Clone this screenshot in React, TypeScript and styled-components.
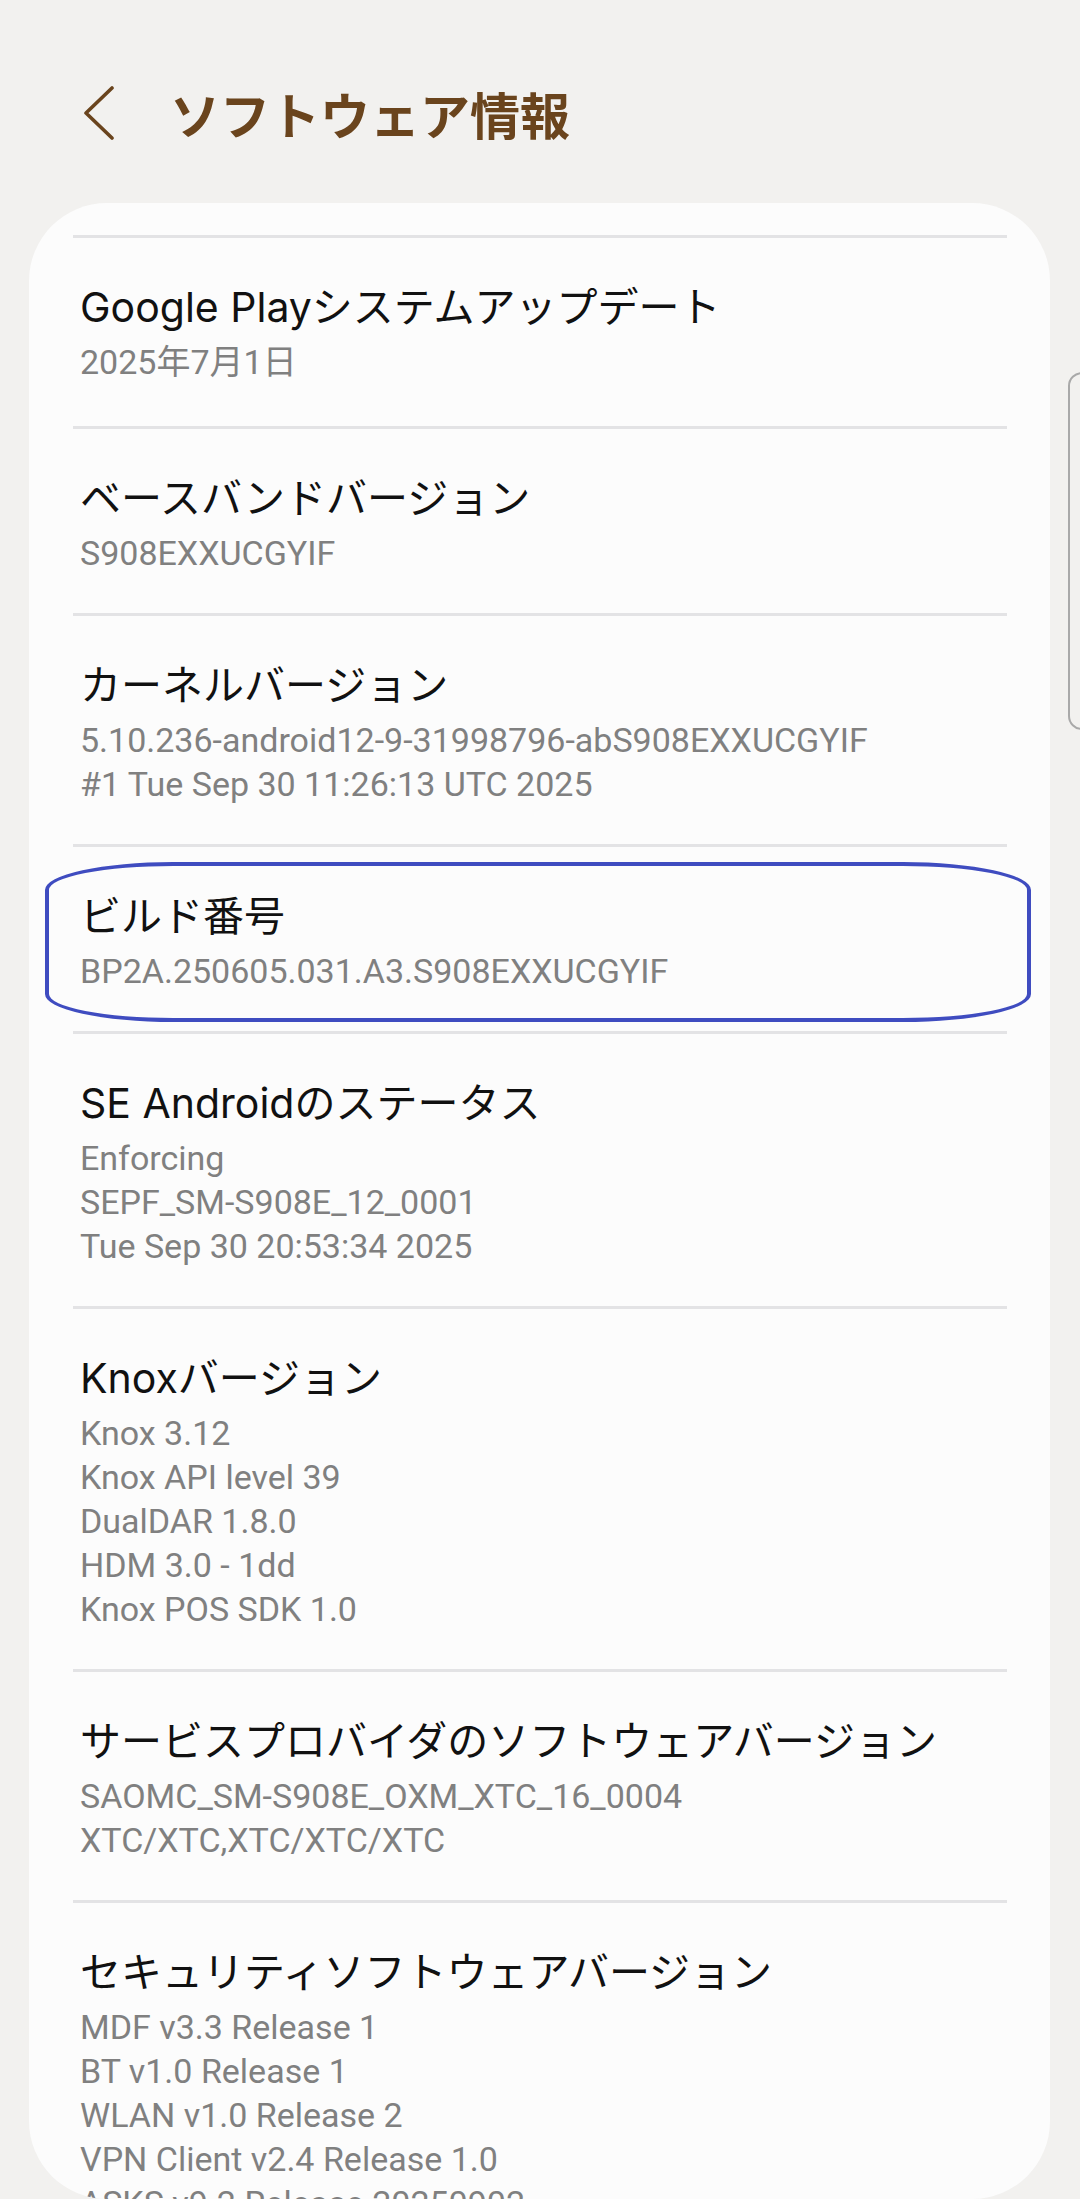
import React from "react";
import styled, { createGlobalStyle } from "styled-components";

const GlobalStyle = createGlobalStyle`
  html, body {
    margin: 0;
    padding: 0;
    background: #f2f1ef;
  }
  body {
    width: 1080px;
    height: 2199px;
    overflow: hidden;
    -webkit-font-smoothing: antialiased;
  }
`;

const Page = styled.div`
  position: relative;
  width: 1080px;
  height: 2199px;
  background: #f2f1ef;
  display: flex;
  flex-direction: column;
  overflow: hidden;
`;

const Header = styled.header`
  height: 203px;
  box-sizing: border-box;
  display: flex;
  align-items: flex-start;
  gap: 54px;
  padding: 86px 0 0 82px;
`;

const BackButton = styled.button`
  border: none;
  background: transparent;
  padding: 0;
  margin: 0;
  width: 34px;
  height: 54px;
  display: flex;
  cursor: pointer;
`;

const Title = styled.h1`
  margin: 2px 0 0 0;
  font-family: "Noto Sans CJK JP", "Noto Sans", sans-serif;
  font-weight: 700;
  font-size: 50px;
  line-height: 50px;
  color: #6a441d;
  letter-spacing: 0;
`;

const Card = styled.section`
  margin-left: 29px;
  width: 1021px;
  height: 1996px;
  box-sizing: border-box;
  background: #fcfcfc;
  border-radius: 78px;
  overflow: hidden;
  padding: 32px 43px 0 44px;
`;

const List = styled.ul`
  list-style: none;
  margin: 0;
  padding: 0;
  display: flex;
  flex-direction: column;
`;

const Item = styled.li`
  position: relative;
  border-top: 3px solid #e3e3e5;
  padding: 41px 0 38px 7px;
  display: flex;
  flex-direction: column;
`;

const ItemTitle = styled.div`
  font-family: Inter, "Noto Sans CJK JP", sans-serif;
  font-size: 41px;
  line-height: 56px;
  height: 56px;
  color: #111111;
  white-space: nowrap;
`;

const Summary = styled.div`
  margin-top: 5px;
  display: flex;
  flex-direction: column;
`;

const SummaryLine = styled.div<{ $cjk?: boolean }>`
  font-family: Roboto, "Noto Sans CJK JP", sans-serif;
  font-size: 34px;
  line-height: 44px;
  height: ${(p) => (p.$cjk ? "48px" : "44px")};
  color: #808080;
  white-space: nowrap;
`;

const Highlight = styled.div`
  position: absolute;
  top: 15px;
  left: -28px;
  width: 986px;
  height: 160px;
  box-sizing: border-box;
  border: 4px solid #3f4cc0;
  border-radius: 128px / 28px;
  pointer-events: none;
`;

const EdgeHandle = styled.div`
  position: absolute;
  top: 372px;
  left: 1068px;
  width: 40px;
  height: 358px;
  box-sizing: border-box;
  border: 2px solid #a9a9a9;
  border-radius: 14px;
  background: #f2f1ef;
`;

type Entry = { title: string; lines: string[]; highlighted?: boolean };

const entries: Entry[] = [
  { title: "Google Playシステムアップデート", lines: ["2025年7月1日"] },
  { title: "ベースバンドバージョン", lines: ["S908EXXUCGYIF"] },
  {
    title: "カーネルバージョン",
    lines: [
      "5.10.236-android12-9-31998796-abS908EXXUCGYIF",
      "#1 Tue Sep 30 11:26:13 UTC 2025",
    ],
  },
  {
    title: "ビルド番号",
    lines: ["BP2A.250605.031.A3.S908EXXUCGYIF"],
    highlighted: true,
  },
  {
    title: "SE Androidのステータス",
    lines: ["Enforcing", "SEPF_SM-S908E_12_0001", "Tue Sep 30 20:53:34 2025"],
  },
  {
    title: "Knoxバージョン",
    lines: [
      "Knox 3.12",
      "Knox API level 39",
      "DualDAR 1.8.0",
      "HDM 3.0 - 1dd",
      "Knox POS SDK 1.0",
    ],
  },
  {
    title: "サービスプロバイダのソフトウェアバージョン",
    lines: ["SAOMC_SM-S908E_OXM_XTC_16_0004", "XTC/XTC,XTC/XTC/XTC"],
  },
  {
    title: "セキュリティソフトウェアバージョン",
    lines: [
      "MDF v3.3 Release 1",
      "BT v1.0 Release 1",
      "WLAN v1.0 Release 2",
      "VPN Client v2.4 Release 1.0",
      "ASKS v9.2 Release 20250902",
    ],
  },
];

const hasCjk = (s: string) => /[\u3040-\u30ff\u4e00-\u9fff]/.test(s);

const BackIcon = () => (
  <svg width="34" height="54" viewBox="0 0 34 54" fill="none">
    <polyline
      points="30,2 4,27 30,52"
      stroke="#6a441d"
      strokeWidth="3.6"
      strokeLinecap="round"
      strokeLinejoin="round"
    />
  </svg>
);

export default function App() {
  return (
    <>
      <GlobalStyle />
      <Page>
        <Header>
          <BackButton aria-label="戻る">
            <BackIcon />
          </BackButton>
          <Title>ソフトウェア情報</Title>
        </Header>
        <Card>
          <List>
            {entries.map((e) => (
              <Item key={e.title}>
                <ItemTitle>{e.title}</ItemTitle>
                <Summary>
                  {e.lines.map((l) => (
                    <SummaryLine key={l} $cjk={hasCjk(l)}>
                      {l}
                    </SummaryLine>
                  ))}
                </Summary>
                {e.highlighted && <Highlight />}
              </Item>
            ))}
          </List>
        </Card>
        <EdgeHandle />
      </Page>
    </>
  );
}
